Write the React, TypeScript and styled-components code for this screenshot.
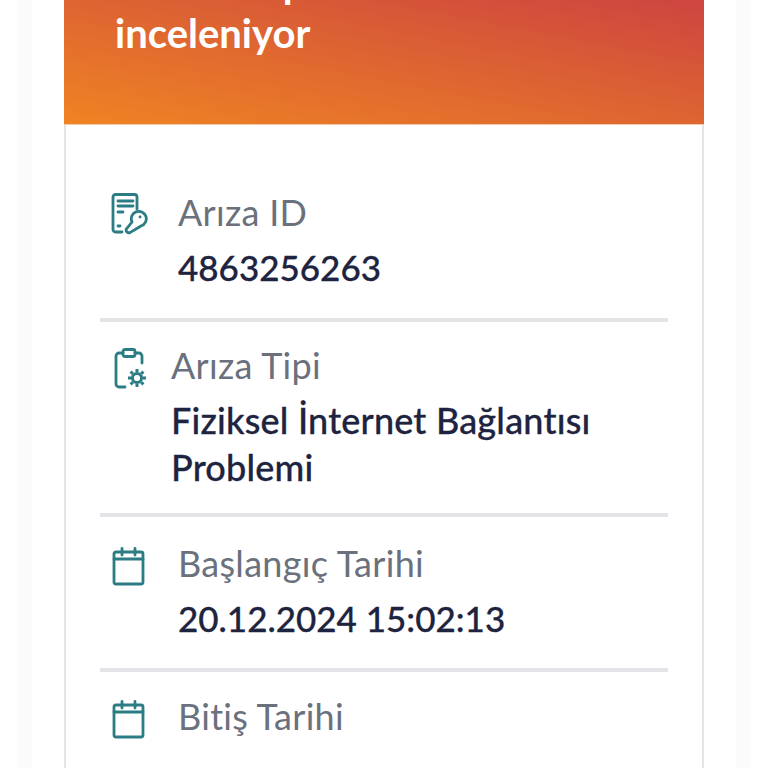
import React from 'react';
import styled, { createGlobalStyle } from 'styled-components';

const GlobalStyle = createGlobalStyle`
  html, body {
    margin: 0;
    padding: 0;
    height: 768px;
    overflow: hidden;
    background: #ffffff;
    font-family: "Lato", "Open Sans", sans-serif;
  }
`;

const teal = '#2b7c83';

const ReportIcon = () => (
  <svg width="38" height="42" viewBox="0 0 38 42" fill="none" stroke={teal} strokeWidth="2.8" strokeLinecap="round" strokeLinejoin="round">
    <path d="M12 39H5.5A2.5 2.5 0 0 1 3 36.5V4A2.5 2.5 0 0 1 5.5 1.5H24.5A2.5 2.5 0 0 1 27 4V16" />
    <path d="M8 8H23M8 13H23M8 19H13" />
    <path d="M8 33H10" />
    <path d="M22 29A7.5 7.5 0 1 1 31 33L19.9 39.6A2.9 2.9 0 0 1 16.1 36.4Z" />
    <path d="M30 24H30.1" />
  </svg>
);

const ClipboardIcon = () => (
  <svg width="36" height="42" viewBox="0 0 36 42" fill="none" stroke={teal} strokeWidth="2.8" strokeLinecap="round" strokeLinejoin="round">
    <path d="M9 5H5A3 3 0 0 0 2 8V36A3 3 0 0 0 5 39H11" />
    <path d="M21 5H25A3 3 0 0 1 28 8V15" />
    <rect x="9" y="1.5" width="12" height="7" rx="2" />
    <circle cx="23" cy="30" r="4.6" strokeWidth="3" />
    <path strokeWidth="3" strokeLinecap="butt" d="M23 21V24M23 36V39M14 30H17M29 30H32M16.6 23.6L18.8 25.8M27.2 34.2L29.4 36.4M16.6 36.4L18.8 34.2M27.2 25.8L29.4 23.6" />
  </svg>
);

const CalendarIcon = () => (
  <svg width="34" height="39" viewBox="0 0 34 39" fill="none" stroke={teal} strokeWidth="2.8" strokeLinecap="round" strokeLinejoin="round">
    <rect x="2" y="5" width="29" height="32" rx="2" />
    <path d="M2 12H31" />
    <path d="M10 1.5V8M23 1.5V8" />
  </svg>
);

const rows = [
  { icon: <ReportIcon />, label: 'Arıza ID', value: '4863256263', numeric: true, indent: 10, iconTop: 4, textLeft: 28, top: 0, bottom: 27 },
  { icon: <ClipboardIcon />, label: 'Arıza Tipi', value: 'Fiziksel İnternet Bağlantısı Problemi', numeric: false, indent: 14, iconTop: 6, textLeft: 21, top: 20, bottom: 22 },
  { icon: <CalendarIcon />, label: 'Başlangıç Tarihi', value: '20.12.2024 15:02:13', numeric: true, indent: 12, iconTop: 7, textLeft: 28, top: 23, bottom: 26 },
  { icon: <CalendarIcon />, label: 'Bitiş Tarihi', value: '', numeric: false, indent: 12, iconTop: 7, textLeft: 28, top: 21, bottom: 0 },
];

const App = () => (
  <>
    <GlobalStyle />
    <Page>
      <Gutter>
        <Card>
          <Banner>
            <BannerTitle>
              Arıza talepleri
              <br />
              inceleniyor
            </BannerTitle>
          </Banner>
          <Body>
            {rows.map((row) => (
              <Row key={row.label} $top={row.top} $bottom={row.bottom}>
                <IconSlot $indent={row.indent} $top={row.iconTop}>{row.icon}</IconSlot>
                <RowText $left={row.textLeft}>
                  <Label>{row.label}</Label>
                  {row.value && <Value $numeric={row.numeric}>{row.value}</Value>}
                </RowText>
              </Row>
            ))}
          </Body>
        </Card>
      </Gutter>
    </Page>
  </>
);

const Page = styled.div`
  width: 768px;
  height: 768px;
  overflow: hidden;
  padding: 0 18px;
  box-sizing: border-box;
`;
const Gutter = styled.div`
  height: 100%;
  padding: 0 46px;
  background: #ffffff;
  box-shadow: inset 14px 0 0 #fbfbfb, inset -14px 0 0 #fbfbfb;
`;
const Card = styled.div`
  height: 100%;
  background: #ffffff;
  border: solid #e4e5e8;
  border-width: 0 2px;
`;
const Banner = styled.div`
  height: 124px;
  margin: 0 -2px;
  padding: 0 51px 66px;
  box-sizing: border-box;
  display: flex;
  align-items: flex-end;
  overflow: hidden;
  background: linear-gradient(to bottom left, #cd4540 0%, #ef8423 100%);
  box-shadow: 0 1px 0 #f3c9a8;
`;
const BannerTitle = styled.h1`
  margin: 0;
  color: #ffffff;
  font-size: 40px;
  line-height: 50px;
  font-weight: 700;
  white-space: nowrap;
`;
const Body = styled.div`
  padding: 65px 34px 0 34px;
`;
const Row = styled.div<{ $top: number; $bottom: number }>`
  display: flex;
  border-bottom: 4px solid #e2e4e8;
  padding: ${(p) => p.$top}px 0 ${(p) => p.$bottom}px;
  &:last-child {
    border-bottom: none;
  }
`;
const IconSlot = styled.div<{ $indent: number; $top: number }>`
  width: 50px;
  box-sizing: border-box;
  padding: ${(p) => p.$top}px 0 0 ${(p) => p.$indent}px;
  flex: none;
`;
const RowText = styled.div<{ $left: number }>`
  padding-left: ${(p) => p.$left}px;
  display: flex;
  flex-direction: column;
  gap: 8px;
`;
const Label = styled.span`
  color: #6a717d;
  font-size: 36px;
  line-height: 47px;
  letter-spacing: 0.3px;
`;
const Value = styled.span<{ $numeric: boolean }>`
  color: #1e2440;
  font-size: ${(p) => (p.$numeric ? '35px' : '36px')};
  line-height: 47px;
  font-weight: 500;
  letter-spacing: ${(p) => (p.$numeric ? '0' : '0.2px')};
  -webkit-text-stroke: 0.3px #1e2440;
`;

export default App;
